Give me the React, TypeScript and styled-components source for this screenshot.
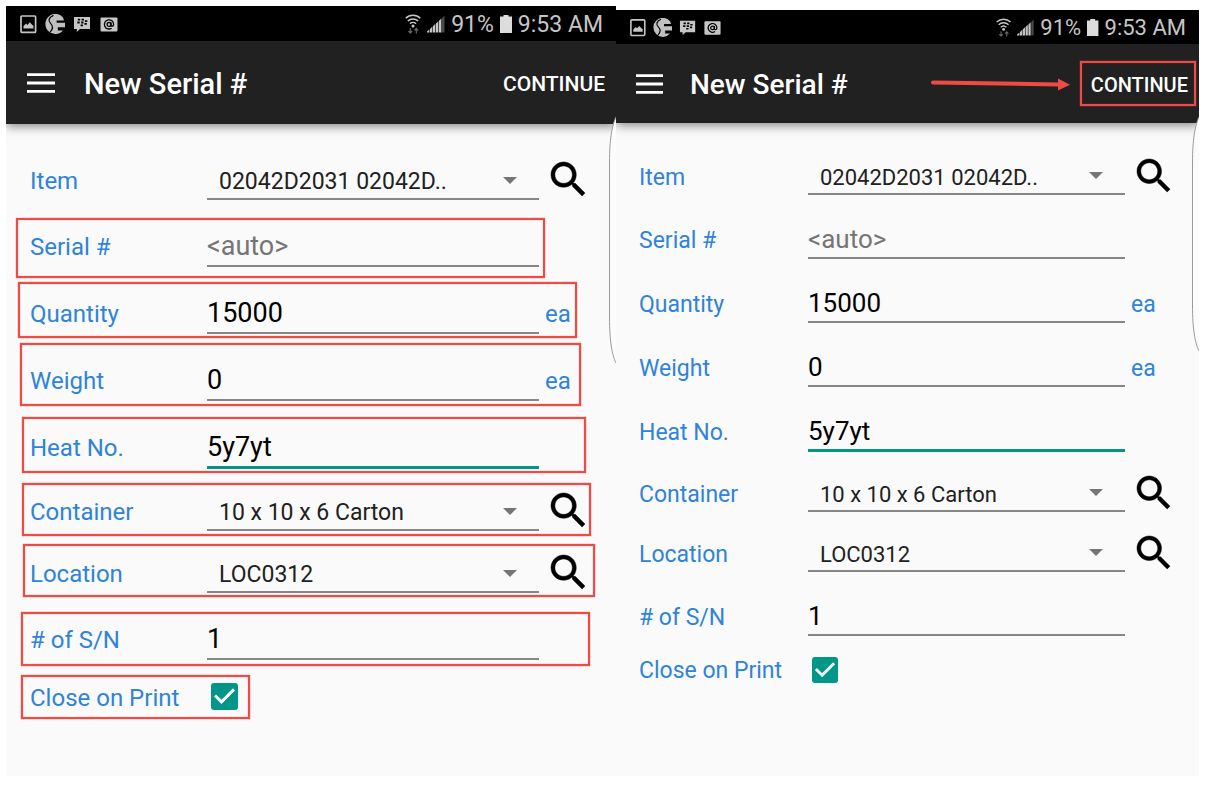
import React, { useId } from "react";
import styled, { createGlobalStyle, css, ThemeProvider, useTheme } from "styled-components";

interface Metrics {
  grow: number;
  topGap: number;
  statusHeight: number;
  barHeight: number;
  status: number;
  title: number;
  action: number;
  label: number;
  option: number;
  input: number;
  inputDrop: number;
  iconHeight: number;
  iconGap: number;
  menu: number;
  titleGap: number;
  barStart: number;
  gutter: number;
  labelCol: number;
  trailCol: number;
  formTop: number;
  textPad: number;
  pickPad: number;
  search: number;
  searchGap: number;
  check: number;
  checkRow: number;
  handle: number;
}

const large: Metrics = {
  grow: 610, topGap: 0, statusHeight: 35, barHeight: 83, status: 23, title: 29, action: 21,
  label: 24, option: 23, input: 27, inputDrop: 0, iconHeight: 20, iconGap: 8, menu: 28,
  titleGap: 29, barStart: 21, gutter: 24, labelCol: 177, trailCol: 77, formTop: 14, textPad: 27,
  pickPad: 24, search: 34, searchGap: 4, check: 27, checkRow: 72, handle: 246,
};

const small: Metrics = {
  grow: 583, topGap: 4, statusHeight: 34, barHeight: 79, status: 22, title: 28, action: 20,
  label: 23, option: 22, input: 26, inputDrop: 2, iconHeight: 19, iconGap: 7, menu: 27,
  titleGap: 27, barStart: 20, gutter: 23, labelCol: 169, trailCol: 74, formTop: 12, textPad: 24,
  pickPad: 22, search: 33, searchGap: 3, check: 26, checkRow: 67, handle: 234,
};

const RED = "#ef4a44";
const LINE = "#868686";

const GlobalStyle = createGlobalStyle`
  * { box-sizing: border-box; }
  body { margin: 0; background: #fff; font-family: Roboto, "Liberation Sans", sans-serif; }
  button, input, select { font-family: inherit; margin: 0; outline: none; }
`;

const Page = styled.main`
  display: flex;
  min-height: 100vh;
  padding: 6px 11px 22px 6px;
`;

const Screen = styled.section<{ theme: Metrics }>`
  position: relative;
  flex: ${(p) => p.theme.grow} 1 0;
  min-width: 0;
  margin-top: ${(p) => p.theme.topGap}px;
  background: #fafafa;
  overflow: hidden;
`;

const StatusBar = styled.div<{ theme: Metrics }>`
  display: flex;
  align-items: center;
  justify-content: space-between;
  height: ${(p) => p.theme.statusHeight}px;
  padding: 1px 13px 0 13px;
  background: #000;
  color: #c6c6c6;
  font-size: ${(p) => p.theme.status}px;
`;

const StatusGroup = styled.div<{ $gap: number }>`
  display: flex;
  align-items: center;
  gap: ${(p) => p.$gap}px;
  white-space: nowrap;
`;

const StatusIcon = styled.svg<{ theme: Metrics }>`
  display: block;
  height: ${(p) => p.theme.iconHeight}px;
  width: auto;
`;

const AppBar = styled.header<{ theme: Metrics }>`
  position: relative;
  z-index: 1;
  display: flex;
  align-items: center;
  height: ${(p) => p.theme.barHeight}px;
  padding-left: ${(p) => p.theme.barStart}px;
  background: #212121;
  color: #fff;
  box-shadow: 0 2px 10px rgba(0, 0, 0, 0.5);
`;

const MenuButton = styled.button`
  display: block;
  padding: 0;
  border: 0;
  background: none;
`;

const MenuIcon = styled.svg<{ theme: Metrics }>`
  display: block;
  width: ${(p) => p.theme.menu}px;
  height: 20px;
`;

const Title = styled.h1<{ theme: Metrics }>`
  flex: 1;
  margin: 0;
  padding: 2px 0 0 ${(p) => p.theme.titleGap}px;
  font-size: ${(p) => p.theme.title}px;
  font-weight: 500;
  white-space: nowrap;
`;

const ActionWrap = styled.div`
  position: relative;
  padding-top: 2px;
`;

const ActionButton = styled.button<{ theme: Metrics }>`
  padding: 9px 11px;
  border: 0;
  background: none;
  color: #fff;
  font-size: ${(p) => p.theme.action}px;
  line-height: 24px;
  font-weight: 500;
`;

const Highlight = styled.span<{ $inset: string; $width?: number }>`
  position: absolute;
  inset: ${(p) => p.$inset};
  ${(p) => p.$width && `width: ${p.$width}px;`}
  border: 2px solid ${RED};
  box-shadow: 0 0 1px ${RED}, inset 0 0 1px ${RED};
  pointer-events: none;
`;

const Pointer = styled.svg`
  position: absolute;
  right: calc(100% + 9px);
  top: 15px;
  width: 141px;
  height: 14px;
`;

const Form = styled.form<{ theme: Metrics }>`
  padding-top: ${(p) => p.theme.formTop}px;
`;

type RowKind = "text" | "pick" | "check";

const Row = styled.div<{ theme: Metrics; $kind: RowKind }>`
  position: relative;
  display: grid;
  grid-template-columns: ${(p) => p.theme.labelCol}px minmax(0, 1fr) ${(p) => p.theme.trailCol}px;
  align-items: baseline;
  padding-left: ${(p) => p.theme.gutter}px;
  ${(p) =>
    p.$kind === "check"
      ? css`
          height: ${p.theme.checkRow}px;
          align-items: center;
          ${Label} { padding-top: 3px; }
        `
      : css`
          padding-top: ${p.$kind === "text" ? p.theme.textPad : p.theme.pickPad}px;
        `}
`;

const Label = styled.label<{ theme: Metrics }>`
  color: #2f83d9;
  font-size: ${(p) => p.theme.label}px;
  line-height: 28px;
  white-space: nowrap;
`;

const Unit = styled.span<{ theme: Metrics }>`
  padding-left: 6px;
  color: #2f83d9;
  font-size: ${(p) => p.theme.label}px;
  line-height: 28px;
`;

const TextInput = styled.input<{ theme: Metrics; $active?: boolean }>`
  width: 100%;
  height: ${(p) => (p.$active ? 41 : 40)}px;
  padding: ${(p) => p.theme.inputDrop}px 0 0;
  border: 0;
  border-bottom: ${(p) => (p.$active ? "3px solid #009688" : `2px solid ${LINE}`)};
  border-radius: 0;
  background: none;
  color: #000;
  font-size: ${(p) => p.theme.input}px;
  &::placeholder { color: #757575; opacity: 1; }
`;

const SelectWrap = styled.div`
  position: relative;
`;

const Select = styled.select<{ theme: Metrics }>`
  display: block;
  appearance: none;
  width: 100%;
  height: 38px;
  padding: ${(p) => p.theme.inputDrop + 2}px 40px 0 12px;
  border: 0;
  border-bottom: 2px solid ${LINE};
  border-radius: 0;
  background: none;
  color: #212121;
  font-size: ${(p) => p.theme.option}px;
`;

const Caret = styled.svg`
  position: absolute;
  right: 22px;
  top: 15px;
  width: 14px;
  height: 7px;
  pointer-events: none;
`;

const SearchButton = styled.button<{ theme: Metrics }>`
  align-self: end;
  justify-self: start;
  padding: 0 0 ${(p) => p.theme.searchGap}px 12px;
  border: 0;
  background: none;
  svg {
    display: block;
    overflow: visible;
    width: ${(p) => p.theme.search}px;
    height: ${(p) => p.theme.search}px;
  }
`;

const CheckWrap = styled.span<{ theme: Metrics }>`
  position: relative;
  width: ${(p) => p.theme.check}px;
  height: ${(p) => p.theme.check}px;
  margin-left: 4px;
  svg {
    position: absolute;
    inset: 0;
    pointer-events: none;
  }
`;

const CheckInput = styled.input`
  display: block;
  appearance: none;
  width: 100%;
  height: 100%;
  border-radius: 3px;
  background: #009688;
`;

const EdgeHandle = styled.svg<{ theme: Metrics }>`
  position: absolute;
  z-index: 2;
  right: 0;
  top: ${(p) => 111 - p.theme.topGap}px;
  width: 8px;
  height: ${(p) => p.theme.handle}px;
`;

function NotificationIcons() {
  const { iconGap } = useTheme() as Metrics;
  return (
    <StatusGroup $gap={iconGap}>
      <StatusIcon viewBox="0 0 18 20">
        <rect x="2" y="2" width="14.6" height="16.4" rx="1" fill="none" stroke="#c6c6c6" strokeWidth="1.7" />
        <path d="M4.5 14.5v-2.4l2.6-2.5 1.4 1.3 2.3-2.6 2 2.3 1.6 1.2v2.7z" fill="#c6c6c6" />
      </StatusIcon>
      <StatusIcon viewBox="0 0 20 20">
        <path d="M18 3.4A10 10 0 1 0 18 16.4h-5.2v-3.2H20V8.8h-8.4V6.4H19z" fill="#c0c0c0" />
        <path d="M8.4 1.4C3.4 3.6 3 6.8 5.6 9.4C8.2 12 8 15 5.2 18" fill="none" stroke="#000" strokeWidth="1.2" />
      </StatusIcon>
      <StatusIcon viewBox="0 0 18 20">
        <path d="M1 3h16v12H7l-3.2 3v-3H1z" fill="#c6c6c6" />
        <path
          d="M4.8 5.7h2.4M8.6 5.7H11M4.3 8.5h2.4M8.1 8.5h2.4M11.9 7.1h2.4M7.6 11.3H10M11.4 9.9h2.4"
          stroke="#000"
          strokeWidth="1.8"
        />
      </StatusIcon>
      <StatusIcon viewBox="0 0 20 20">
        <rect x="1.5" y="3.5" width="17" height="14" rx="1" fill="#c6c6c6" />
        <g fill="none" stroke="#000" strokeWidth="1.3">
          <circle cx="10" cy="10.4" r="1.9" />
          <path d="M12 8.3v2.9c0 1.6 2.6 1.4 2.6-.8a4.6 4.6 0 1 0-2 3.8" />
        </g>
      </StatusIcon>
    </StatusGroup>
  );
}

function SystemStatus() {
  return (
    <StatusGroup $gap={6}>
      <StatusIcon viewBox="0 0 16 20">
        <g fill="none" stroke="#c6c6c6" strokeWidth="1.5">
          <path d="M.7 4.2a10.500 10.500 0 0 1 14.600 0" />
          <path d="M2.800 7a7.500 7.500 0 0 1 10.400 0" />
          <path d="M5 9.700a4.400 4.400 0 0 1 6 0" />
        </g>
        <circle cx="8" cy="12" r="1.5" fill="#c6c6c6" />
        <path
          d="M5.3 14v5M3.500 17l1.800 2 1.800-2M11.300 19.500v-5M9.500 16.500l1.800-2 1.800 2"
          fill="none"
          stroke="#666"
          strokeWidth="1.2"
        />
      </StatusIcon>
      <StatusIcon viewBox="0 0 18 20">
        <path
          d="M0 18.500v-1l2.400-2v3zM3 18.500v-3.600l2.400-2.400v6zM6 18.500v-6.300l2.400-2.400v8.700zM9 18.500V9.600l2.400-2.400v11.300zM12 18.500V6.800l2.400-2.400v14.100z"
          fill="#c6c6c6"
        />
        <path d="M15 18.500V4.300l2.500-2.600v16.800z" fill="#4a4a4a" />
      </StatusIcon>
      <span>91%</span>
      <StatusIcon viewBox="0 0 12 20">
        <path d="M3.500 1h5v1.600H12V19H0V2.600h3.500z" fill="#dcdcdc" />
      </StatusIcon>
      <span>9:53 AM</span>
    </StatusGroup>
  );
}

function SearchIcon() {
  return (
    <svg viewBox="3 3 17.5 17.5" stroke="#000" strokeWidth="0.25">
      <path d="M15.500 14h-.79l-.28-.27C15.410 12.590 16 11.110 16 9.500 16 5.910 13.090 3 9.500 3S3 5.910 3 9.500 5.910 16 9.500 16c1.610 0 3.090-.59 4.230-1.570l.27.28v.79l5 4.990L20.490 19l-4.990-5zm-6 0C7.010 14 5 11.990 5 9.500S7.010 5 9.500 5 14 7.010 14 9.500 11.990 14 9.500 14z" />
    </svg>
  );
}

interface Mark {
  inset: string;
  width?: number;
}

interface FieldProps {
  label: string;
  value?: string;
  placeholder?: string;
  unit?: string;
  active?: boolean;
  mark?: Mark;
}

function FieldMark({ mark }: { mark?: Mark }) {
  return mark ? <Highlight $inset={mark.inset} $width={mark.width} /> : null;
}

function TextField({ label, value, placeholder, unit, active, mark }: FieldProps) {
  const id = useId();
  return (
    <Row $kind="text">
      <Label htmlFor={id}>{label}</Label>
      <TextInput id={id} defaultValue={value} placeholder={placeholder} $active={active} />
      {unit && <Unit>{unit}</Unit>}
      <FieldMark mark={mark} />
    </Row>
  );
}

function PickField({ label, value, mark }: FieldProps) {
  const id = useId();
  return (
    <Row $kind="pick">
      <Label htmlFor={id}>{label}</Label>
      <SelectWrap>
        <Select id={id} defaultValue={value}>
          <option>{value}</option>
        </Select>
        <Caret viewBox="0 0 14 7">
          <path d="M0 0h14L7 7z" fill="#757575" />
        </Caret>
      </SelectWrap>
      <SearchButton type="button" aria-label={`Search ${label}`}>
        <SearchIcon />
      </SearchButton>
      <FieldMark mark={mark} />
    </Row>
  );
}

function CheckField({ label, mark }: FieldProps) {
  const id = useId();
  return (
    <Row $kind="check">
      <Label htmlFor={id}>{label}</Label>
      <CheckWrap>
        <CheckInput id={id} type="checkbox" defaultChecked />
        <svg viewBox="3 3 18 18">
          <path d="M10 17l-5-5 1.410-1.410L10 14.170l7.590-7.590L19 8l-9 9z" fill="#fff" />
        </svg>
      </CheckWrap>
      <FieldMark mark={mark} />
    </Row>
  );
}

function Handle() {
  const { handle: h } = useTheme() as Metrics;
  return (
    <EdgeHandle viewBox={`0 0 8 ${h}`}>
      <path
        d={`M8 0C4 9 1.500 22 1.500 46V${h - 46}C1.500 ${h - 22} 4 ${h - 8} 8 ${h}`}
        fill="#fcfcfc"
        stroke="#9a9a9a"
      />
    </EdgeHandle>
  );
}

type Marks = Partial<
  Record<"serial" | "quantity" | "weight" | "heat" | "container" | "location" | "count" | "close", Mark>
>;

interface PhoneProps {
  metrics: Metrics;
  marks?: Marks;
  pointAtContinue?: boolean;
}

function PhoneScreen({ metrics, marks = {}, pointAtContinue }: PhoneProps) {
  return (
    <ThemeProvider theme={metrics}>
      <Screen>
        <StatusBar>
          <NotificationIcons />
          <SystemStatus />
        </StatusBar>
        <AppBar>
          <MenuButton type="button" aria-label="Menu">
            <MenuIcon viewBox="0 0 28 20" preserveAspectRatio="none">
              <path d="M0 1.700h28M0 10h28M0 18.300h28" stroke="#fff" strokeWidth="2.8" />
            </MenuIcon>
          </MenuButton>
          <Title>New Serial #</Title>
          <ActionWrap>
            <ActionButton type="button">CONTINUE</ActionButton>
            {pointAtContinue && (
              <>
                <Highlight $inset="-1px 3px 0 0" />
                <Pointer viewBox="0 0 141 14">
                  <path d="M3 5.500L129 7.500" stroke={RED} strokeWidth="4" strokeLinecap="round" />
                  <path d="M128 1.500L140 7.700L128 13.500z" fill={RED} />
                </Pointer>
              </>
            )}
          </ActionWrap>
        </AppBar>
        <Form>
          <PickField label="Item" value="02042D2031 02042D.." />
          <TextField label="Serial #" placeholder="<auto>" mark={marks.serial} />
          <TextField label="Quantity" value="15000" unit="ea" mark={marks.quantity} />
          <TextField label="Weight" value="0" unit="ea" mark={marks.weight} />
          <TextField label="Heat No." value="5y7yt" active mark={marks.heat} />
          <PickField label="Container" value="10 x 10 x 6 Carton" mark={marks.container} />
          <PickField label="Location" value="LOC0312" mark={marks.location} />
          <TextField label="# of S/N" value="1" mark={marks.count} />
          <CheckField label="Close on Print" mark={marks.close} />
        </Form>
        <Handle />
      </Screen>
    </ThemeProvider>
  );
}

const fieldMarks: Marks = {
  serial: { inset: "18px 71px -11px 10px" },
  quantity: { inset: "15px 39px -4px 12px" },
  weight: { inset: "9px 35px -5px 14px" },
  heat: { inset: "16px 30px -4px 16px" },
  container: { inset: "14px 25px -5px 16px" },
  location: { inset: "13px 21px -4px 17px" },
  count: { inset: "19px 26px -6px 15px" },
  close: { inset: "15px auto 13px 15px", width: 229 },
};

export default function App() {
  return (
    <>
      <GlobalStyle />
      <Page>
        <PhoneScreen metrics={large} marks={fieldMarks} />
        <PhoneScreen metrics={small} pointAtContinue />
      </Page>
    </>
  );
}
